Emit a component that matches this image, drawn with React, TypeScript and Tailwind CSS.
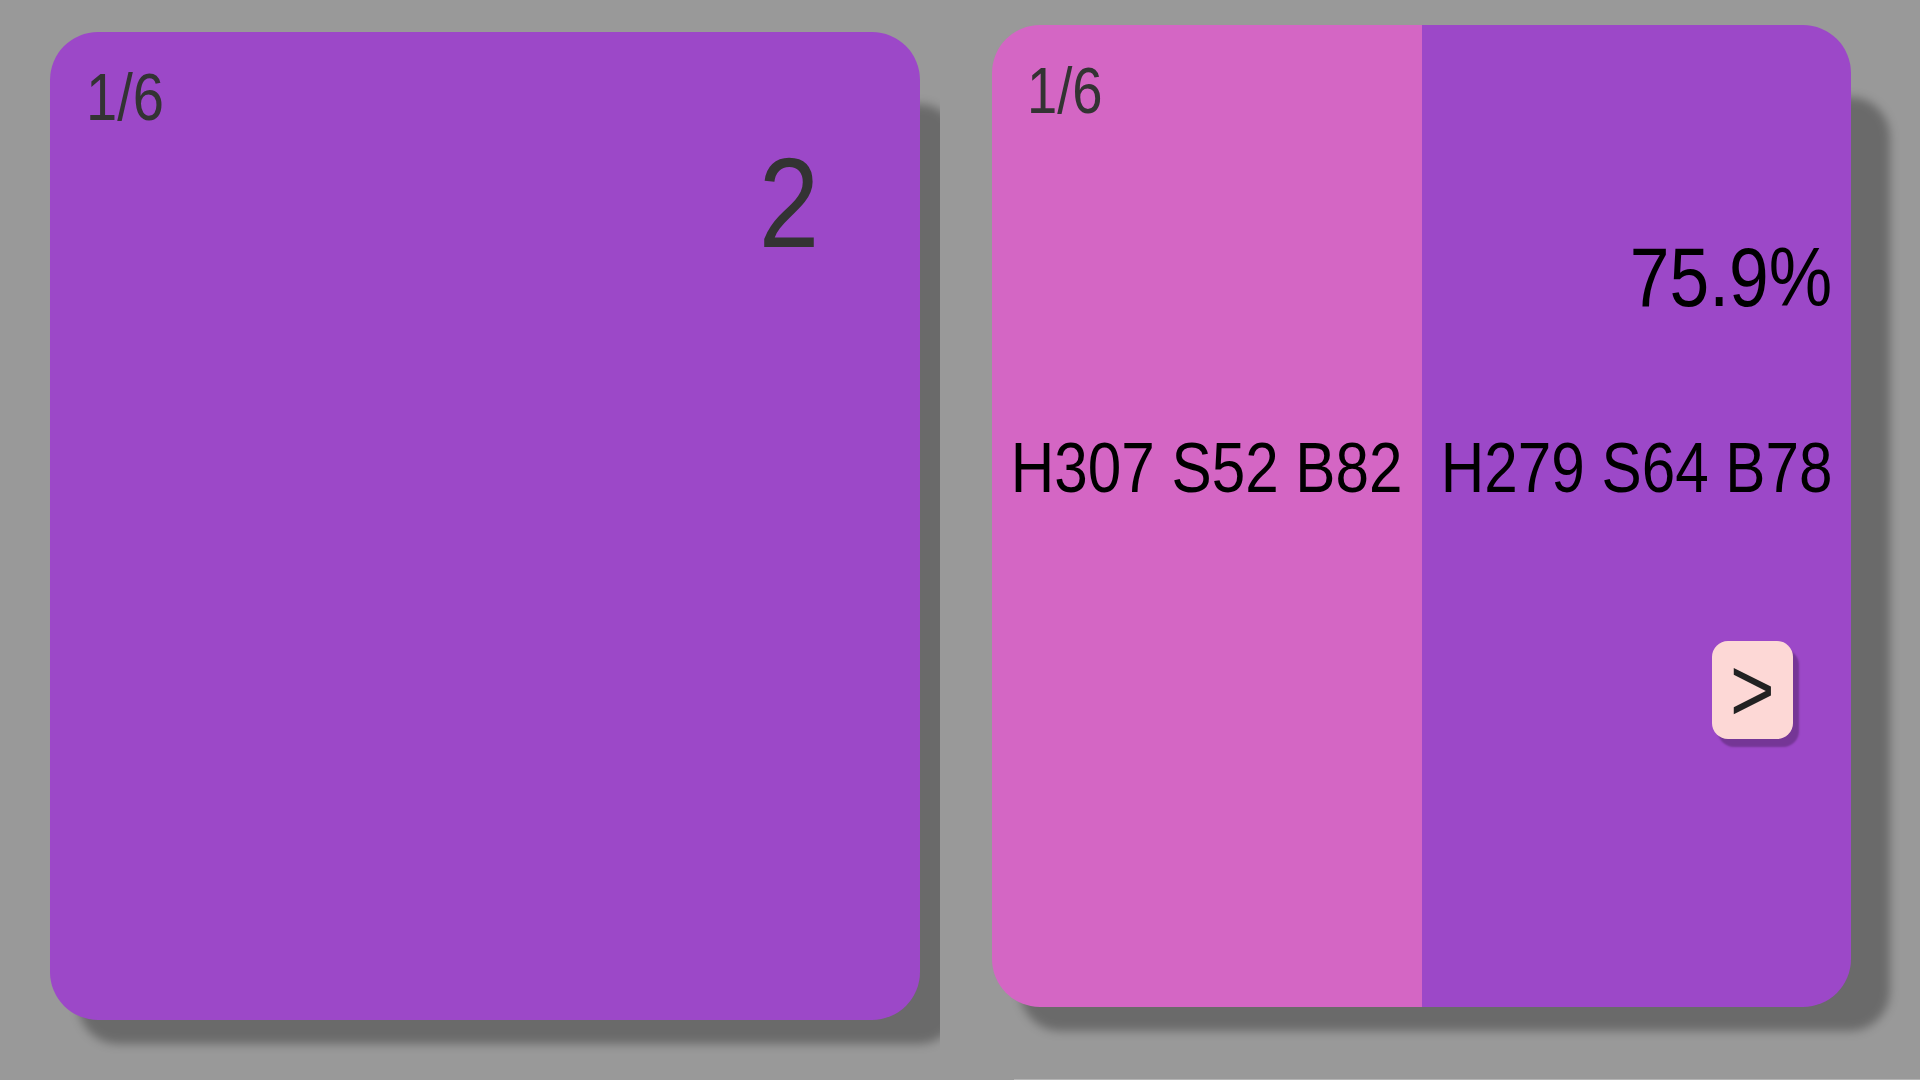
export default function App() {
  return (
    <div className="w-full h-[1080px] bg-[#999999] flex flex-col font-['Liberation_Sans',Arial,sans-serif] overflow-hidden">
      <div className="flex h-[1079px]">
        {/* left card, its shadow is clipped by the cell */}
        <div className="w-[940px] h-full overflow-hidden shrink-0 pl-[50px] pt-[32px]">
          <div className="relative w-[870px] h-[988px]">
            <div className="absolute left-[28px] top-[72px] -right-[39px] -bottom-[24px] rounded-[40px] bg-black/30 blur-[5px]" />
            <div className="relative h-full rounded-[48px] bg-[#9c48c8] flex flex-col pt-[32px] pl-[36px] pr-[33px]">
              <span className="inline-block self-start origin-left scale-x-[0.85] text-[66px] leading-none text-[#333333]">
                1/6
              </span>
              <span className="inline-block self-end mr-[68px] mt-[9px] origin-right scale-x-[0.85] text-[128px] leading-none text-[#333333]">
                2
              </span>
            </div>
          </div>
        </div>

        {/* right card */}
        <div className="pl-[52px] pt-[25px]">
          <div className="relative w-[859px] h-[982px]">
            <div className="absolute left-[28px] top-[72px] -right-[39px] -bottom-[24px] rounded-[40px] bg-black/30 blur-[5px]" />
            <div className="relative h-full rounded-[48px] overflow-hidden grid grid-cols-2">
              <div className="bg-[#d466c4] flex flex-col pt-[34px]">
                <span className="inline-block self-start ml-[35px] origin-left scale-x-[0.85] text-[64px] leading-none text-[#333333]">
                  1/6
                </span>
                <div className="mt-[310px] flex justify-center">
                  <span className="inline-block shrink-0 whitespace-nowrap scale-x-[0.86] text-[70px] leading-none text-black">
                    H307 S52 B82
                  </span>
                </div>
              </div>
              <div className="bg-[#9c48c8] flex flex-col pt-[210px]">
                <span className="inline-block self-end mr-[19px] origin-right scale-x-[0.85] text-[84px] leading-none text-black">
                  75.9%
                </span>
                <div className="mt-[114px] flex justify-center">
                  <span className="inline-block shrink-0 whitespace-nowrap scale-x-[0.86] text-[70px] leading-none text-black">
                    H279 S64 B78
                  </span>
                </div>
                <button className="self-end mr-[58px] mt-[138px] w-[81px] h-[98px] rounded-[16px] bg-[#fdd8d6] shadow-[6px_8px_2px_rgba(0,0,0,0.25)] flex items-center justify-center">
                  <span className="inline-block scale-x-[0.85] text-[90px] leading-none text-[#222222]">
                    &gt;
                  </span>
                </button>
              </div>
            </div>
          </div>
        </div>
      </div>
      <div className="h-px ml-[1014px] bg-[#b4b4b4]" />
    </div>
  );
}
